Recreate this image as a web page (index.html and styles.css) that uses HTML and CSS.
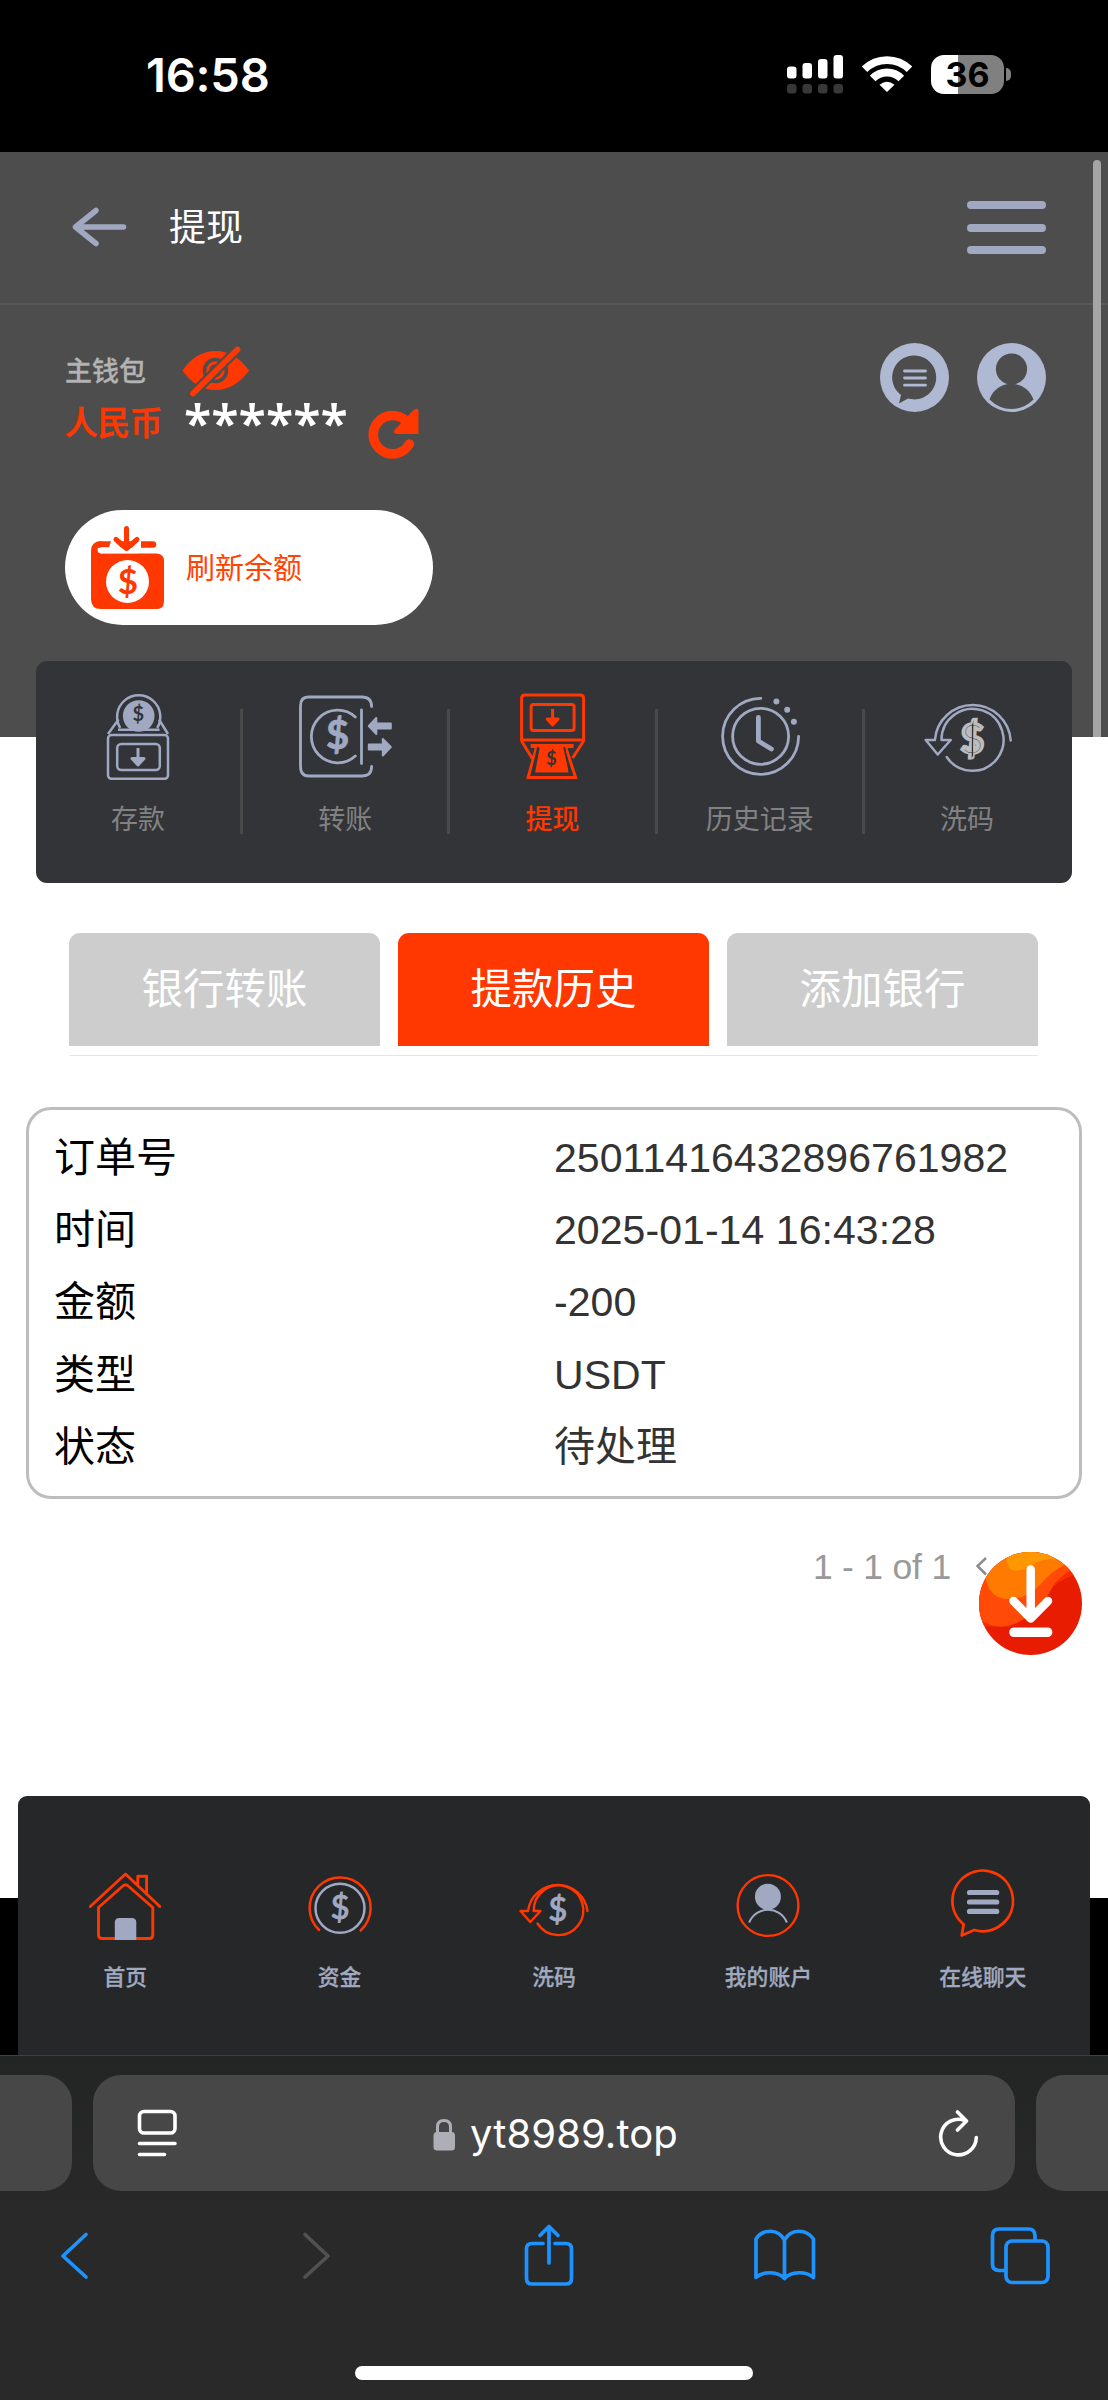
FILE: index.html
```html
<!DOCTYPE html>
<html lang="zh-CN">
<head>
<meta charset="utf-8">
<title>提现</title>
<link rel="stylesheet" href="styles.css">
</head>
<body>
<div class="phone">
  <div class="status">
    <span class="clock">16:58</span>
    <div class="indicators">
      <svg class="signal" viewBox="787 54 57 41" width="57" height="41">
        <g fill="#fff"><rect x="787" y="66.500" width="9.500" height="12" rx="3"/><rect x="802.500" y="63" width="9.500" height="15.500" rx="3"/><rect x="818" y="59" width="9.500" height="19.500" rx="3"/><rect x="833.500" y="55" width="9.500" height="23.500" rx="3"/></g>
        <g fill="#383838"><rect x="787" y="84" width="9.500" height="9.500" rx="3"/><rect x="802.500" y="84" width="9.500" height="9.500" rx="3"/><rect x="818" y="84" width="9.500" height="9.500" rx="3"/><rect x="833.500" y="84" width="9.500" height="9.500" rx="3"/></g>
      </svg>
      <svg class="wifi" viewBox="862 54 50 41" width="50" height="41">
        <g fill="none" stroke="#fff" stroke-width="7.800"><path d="M864.500 69.300A32 32 0 0 1 909.500 69.300"/><path d="M872.700 78.500A20 20 0 0 1 901.300 78.500"/></g>
        <path d="M879.500 84.800Q887 78.800 894.500 84.800L887 92z" fill="#fff"/>
      </svg>
      <div class="battery"><span class="battery-level">36</span></div>
    </div>
  </div>

  <header class="topbar">
    <svg viewBox="72 208 56 42" width="56" height="42"><path d="M96 211.500L75.500 228L96 244.500M76.500 228H123.500" fill="none" stroke="#a0a9c1" stroke-width="5.500" stroke-linecap="round" stroke-linejoin="round"/></svg>
    <h1>提现</h1>
    <div class="menu"><i></i><i></i><i></i></div>
  </header>

  <section class="wallet">
    <div class="balance">
      <div class="balance-row">
        <span class="wallet-name">主钱包</span>
        <svg viewBox="182 345 69 55" width="69" height="55">
          <path d="M182.500 371.500Q196 352 215.500 352T249 371.500Q235 391 215.500 391T182.500 371.500Z" fill="#ff3700"/>
          <circle cx="215.500" cy="371.500" r="11" fill="#ff3700" stroke="#4d4d4d" stroke-width="3.500"/>
          <circle cx="215.500" cy="371.500" r="5.200" fill="none" stroke="#4d4d4d" stroke-width="2.200"/>
          <path d="M237.500 350.500L193 394.500" stroke="#4d4d4d" stroke-width="10" stroke-linecap="round"/>
          <path d="M237.500 350.500L193 394.500" stroke="#ff3700" stroke-width="5.800" stroke-linecap="round"/>
        </svg>
      </div>
      <div class="amount-row">
        <span class="currency">人民币</span>
        <span class="amount">******</span>
        <svg viewBox="367 407 53 54" width="53" height="54">
          <path d="M405 422A19.200 19.200 0 1 0 408.300 445" fill="none" stroke="#ff3700" stroke-width="9.600" stroke-linecap="round"/>
          <path d="M412.500 411Q417.500 407.500 417.500 413V435H396Q391 434 394 430.500Z" fill="#ff3700"/>
        </svg>
      </div>
      <button class="refresh">
        <svg viewBox="90 525 76 87" width="76" height="87">
          <path d="M100 545.500H153" stroke="#ff3700" stroke-width="6.500" stroke-linecap="round"/>
          <path d="M101 542.300Q91 542.300 91 552V600Q91 610 101 610H157Q164 610 164 602V562Q164 554.500 156 554.500H101Q97.500 554 97.500 551Q97.500 548 101 548H112Z" fill="#ff3700"/>
          <path d="M112 539L126.500 554.500L141 539V549L138 554.300H115L100 554.300Q97.500 551 101 548.300H109Z" fill="#fff"/>
          <path d="M126.500 529.500V549M116 540.500L126.500 549.500L137 540.500" fill="none" stroke="#ff3700" stroke-width="5" stroke-linecap="round" stroke-linejoin="round"/>
          <circle cx="127.500" cy="582.500" r="21.500" fill="#fff"/>
          <text x="127.800" y="595" class="coin" font-size="35" fill="#ff3700">$</text>
        </svg>
        <span>刷新余额</span>
      </button>
    </div>
    <div class="shortcuts">
      <svg viewBox="880 343 69 69" width="69" height="69">
        <circle cx="914.500" cy="377.500" r="34.500" fill="#afb9d3"/>
        <path d="M901 395L899 403.500L908 398.500A22 22 0 1 0 901 395Z" fill="#4d4d4d"/>
        <path d="M904.500 371H925.500M904.500 378H925.500M904.500 385.200H925.500" stroke="#afb9d3" stroke-width="2.800" stroke-linecap="round"/>
      </svg>
      <svg viewBox="977.200 343 69 69" width="69" height="69">
        <circle cx="1011.700" cy="377.500" r="34.500" fill="#afb9d3"/>
        <circle cx="1011.700" cy="369" r="15.600" fill="#4d4d4d"/>
        <path d="M989.700 399.500C997 378.500 1026 378.500 1033.700 399.500Q1024 409 1011.700 409T989.700 399.500Z" fill="#4d4d4d"/>
      </svg>
    </div>
  </section>

  <nav class="actions">
    <a class="action">
      <svg viewBox="89 688 100 96" width="100" height="96" fill="none" stroke="#a0a9c1" stroke-width="2.500">
        <path d="M121.200 728A21.600 21.600 0 1 1 158.200 728"/>
        <circle cx="139.700" cy="716" r="15.800" fill="#a0a9c1" stroke="none"/>
        <path d="M119 729.700H160.500M109 734L119.500 719.500M169 734L160 719.500"/>
        <rect x="109" y="735" width="60" height="43.800" rx="3.500"/><rect x="118.200" y="744" width="42.600" height="26" rx="4"/>
        <path d="M139 748V758M133 758.500H145L139 765Z" fill="#a0a9c1" stroke-width="3" stroke-linejoin="round"/>
        <text x="139.400" y="721" class="coin" font-size="20" fill="#333438" stroke="none">$</text>
      </svg>
      <span>存款</span>
    </a>
    <a class="action">
      <svg viewBox="296.200 688 100 96" width="100" height="96" fill="none" stroke="#a0a9c1" stroke-width="2.800" stroke-linecap="round">
        <path d="M372.800 706.500Q372.800 697 363 697H309.500Q301.700 697 301.700 706V766Q301.700 776 309.500 776H363Q372.800 776 372.800 766.500"/>
        <path d="M356.500 717A26.300 26.300 0 1 0 356.500 756M362.700 710V763.500"/>
        <g fill="#a0a9c1" stroke-width="2" stroke-linejoin="round"><path d="M370 726L377.500 718V723.500H392V728.500H377.500V734Z"/><path d="M392 747L384 739V744.500H370V749.500H384V755.500Z"/></g>
        <text x="338.700" y="749" class="coin" font-size="40" fill="#a0a9c1" stroke="#a0a9c1" stroke-width=".8">$</text>
      </svg>
      <span>转账</span>
    </a>
    <a class="action is-active">
      <svg viewBox="503.400 688 100 96" width="100" height="96" fill="none" stroke="#ff3700" stroke-width="3">
        <path d="M523 740V698.500Q523 695 526.500 695H581.500Q585 695 585 698.500V740Z"/>
        <rect x="532.500" y="704.500" width="43" height="26" rx="2.500"/>
        <path d="M554 709V718M548.500 719H559.500L554 725Z" fill="#ff3700" stroke-linejoin="round"/>
        <path d="M523 741L534 759M585 741L574 758M538 747L529.500 777.500H577L567 747"/>
        <path d="M532 744H575V748H566.500L570 772.500H536.500L541 748H532Z" fill="#ff3700" stroke="none"/>
        <path d="M539.500 747L533.500 773.500M565.500 747L571.500 773.500" stroke="#333438" stroke-width="1.800"/>
        <text x="553" y="765" class="coin" font-size="18" fill="#333438" stroke="none">$</text>
      </svg>
      <span>提现</span>
    </a>
    <a class="action">
      <svg viewBox="710.600 688 100 96" width="100" height="96" fill="none" stroke="#a0a9c1" stroke-width="2.800" stroke-linecap="round">
        <path d="M761.500 698.300A38 38 0 1 0 799.200 736.500"/><circle cx="761.200" cy="736.300" r="28"/>
        <path d="M759 717.500V741L772 749" stroke-width="4.800" stroke-linejoin="round"/>
        <g fill="#a0a9c1" stroke="none"><circle cx="777" cy="701.500" r="3"/><circle cx="787.800" cy="709.800" r="3"/><circle cx="794.500" cy="721.800" r="3"/></g>
      </svg>
      <span>历史记录</span>
    </a>
    <a class="action">
      <svg viewBox="917.800 688 100 96" width="100" height="96" fill="none" stroke="#a0a9c1" stroke-width="2.500" stroke-linecap="round">
        <path d="M942.300 740A31 31 0 1 1 947.500 757M935.700 740A38 38 0 0 1 1011.500 740.500M935.700 740H926.500L938.500 754.500L951.500 740H942.300" stroke-linejoin="round"/>
        <text x="973.200" y="753" class="coin" font-size="40" fill="#bdbdbd" stroke="#bdbdbd" stroke-width="3.500">$</text>
        <path d="M973.300 724V756" stroke="#333438" stroke-width="1.200"/>
        <text x="973.200" y="753" class="coin thin" font-size="40" fill="#333438" stroke="none">$</text>
      </svg>
      <span>洗码</span>
    </a>
  </nav>

  <main class="content">
    <div class="tabs"><a>银行转账</a><a class="is-selected">提款历史</a><a>添加银行</a></div>
    <dl class="record">
      <dt>订单号</dt><dd>25011416432896761982</dd>
      <dt>时间</dt><dd>2025-01-14 16:43:28</dd>
      <dt>金额</dt><dd>-200</dd>
      <dt>类型</dt><dd>USDT</dd>
      <dt>状态</dt><dd>待处理</dd>
    </dl>
    <div class="pager">
      <span>1 - 1 of 1</span>
      <svg viewBox="0 0 14 22" width="14" height="22"><path d="M11 2L2.500 10L11 18.500" fill="none" stroke="#8c8c8c" stroke-width="2.500"/></svg>
    </div>
  </main>

  <div class="dock">
  <nav class="bottom-nav">
    <a>
      <svg viewBox="85.200 1868 80 76" width="80" height="76" fill="none" stroke="#ff3700" stroke-width="2.900" stroke-linecap="round" stroke-linejoin="round">
        <path d="M90.500 1906.500L125.700 1874L160 1906.500M138 1884.500V1876.300H146.800V1892.500"/>
        <path d="M98.700 1907.500L123 1886Q125.700 1883.500 128.400 1886L153 1907.500V1935Q153 1938.500 149.500 1938.500H102.500Q98.700 1938.500 98.700 1935Z"/>
        <path d="M115 1940V1922.500Q115 1918 119.500 1918H132Q136.500 1918 136.500 1922.500V1940Z" fill="#a0a9c1" stroke="none"/>
      </svg><span>首页</span>
    </a>
    <a>
      <svg viewBox="299.600 1868 80 76" width="80" height="76" fill="none" stroke-width="2.500" stroke-linecap="round">
        <path d="M318.700 1930A30.500 30.500 0 1 1 360.200 1930.500" stroke="#ff3700"/><circle cx="339.600" cy="1908.300" r="24.500" stroke="#a0a9c1"/>
        <text x="339.800" y="1919" class="coin regular" font-size="33" fill="#a0a9c1" stroke="#a0a9c1" stroke-width=".8">$</text>
      </svg><span>资金</span>
    </a>
    <a>
      <svg viewBox="514 1868 80 76" width="80" height="76" fill="none" stroke="#ff3700" stroke-width="2.400" stroke-linecap="round" stroke-linejoin="round">
        <path d="M533.700 1911A24.800 24.800 0 1 1 537.500 1923.500M528 1911A30 30 0 0 1 587.500 1911M528 1911H520.500L530.300 1922L540.500 1911H533.700"/>
        <text x="557.700" y="1921" class="coin regular" font-size="33" fill="#a0a9c1" stroke="#a0a9c1" stroke-width=".8">$</text>
      </svg><span>洗码</span>
    </a>
    <a>
      <svg viewBox="728.400 1868 80 76" width="80" height="76" fill="none">
        <circle cx="768.400" cy="1905.500" r="30.400" stroke="#ff3700" stroke-width="2.400"/><circle cx="768.300" cy="1896.800" r="13" fill="#a0a9c1"/>
        <path d="M749.500 1922.500C757 1905.500 780 1905.500 787.300 1922.500" stroke="#a0a9c1" stroke-width="2"/>
      </svg><span>我的账户</span>
    </a>
    <a>
      <svg viewBox="942.800 1868 80 76" width="80" height="76" fill="none" stroke-linejoin="round">
        <path d="M963.500 1924.500L961.500 1935.500L974 1930A30.300 30.300 0 1 0 963.500 1924.500Z" stroke="#ff3700" stroke-width="2.800"/>
        <path d="M969.300 1892.500H996.500M969.300 1902H996.500M969.300 1911.400H996.500" stroke="#a0a9c1" stroke-width="5.200" stroke-linecap="round"/>
      </svg><span>在线聊天</span>
    </a>
  </nav>
  </div>

  <footer class="browser">
    <div class="address-row">
      <div class="peek peek-left"></div>
      <div class="address">
        <svg viewBox="136 2108 42 52" width="42" height="52" fill="none" stroke="#fff" stroke-width="3.600" stroke-linecap="round"><rect x="139.500" y="2112.500" width="35.500" height="21.500" rx="4.500"/><path d="M139.500 2144.500H175M139.500 2155.500H164.500"/></svg>
        <div class="site">
          <svg viewBox="433 2116 22 33" width="22" height="33"><path d="M437.500 2131V2125Q437.500 2118.500 444 2118.500T450.500 2125V2131" fill="none" stroke="#aeaeb7" stroke-width="3"/><rect x="433.500" y="2130" width="21.500" height="18.500" rx="3.500" fill="#aeaeb7"/></svg>
          <span>yt8989.top</span>
        </div>
        <svg viewBox="938 2106 42 50" width="42" height="50" fill="none" stroke="#fff" stroke-width="3.600" stroke-linecap="round" stroke-linejoin="round"><path d="M965 2118.500A17.800 17.800 0 1 0 976.300 2135.500M957.500 2110L966.500 2119L957.500 2128"/></svg>
      </div>
      <div class="peek peek-right"></div>
    </div>
    <div class="toolbar">
      <svg viewBox="59 2231 31 49" width="31" height="49"><path d="M86 2234.500L63 2256L86 2277" class="tool"/></svg>
      <svg viewBox="301 2231 31 49" width="31" height="49"><path d="M305 2234.500L328 2256L305 2277" class="tool tool-off"/></svg>
      <svg viewBox="523 2221 52 66" width="52" height="66"><path d="M543 2242.500H532Q526.500 2242.500 526.500 2248V2277.500Q526.500 2283 532 2283H566Q571.500 2283 571.500 2277.500V2248Q571.500 2242.500 566 2242.500H555M549 2226V2262M540 2234.500L549 2225.500L558 2234.500" class="tool"/></svg>
      <svg viewBox="752 2227 65 56" width="65" height="56"><path d="M784.500 2240C778 2228.500 763 2228.500 756 2239V2277.500C763 2271 778 2271 784.500 2278.500C791 2271 806 2271 813.500 2277.500V2239C806 2228.500 791 2228.500 784.500 2240V2278" class="tool"/></svg>
      <svg viewBox="989 2225 62 61" width="62" height="61"><path d="M1005 2270.500H999Q992.500 2270.500 992.500 2264V2236Q992.500 2229 999 2229H1028.500Q1035 2229 1035 2236V2240" class="tool"/><rect x="1006" y="2241" width="42" height="41.500" rx="6" class="tool"/></svg>
    </div>
    <div class="home-bar"></div>
  </footer>

  <div class="scroll-thumb"></div>
  <svg class="download" viewBox="979 1551 104 104" width="104" height="104">
    <defs>
      <clipPath id="round"><circle cx="1030.500" cy="1603.500" r="51.500"/></clipPath>
    </defs>
    <g clip-path="url(#round)">
      <rect x="979" y="1551" width="104" height="104" fill="#e81c00"/>
      <path d="M979 1625Q1010 1632 1036 1608Q1052 1580 1078 1574V1551H979Z" fill="#fa2c00"/>
      <path d="M979 1619Q998 1632 1017 1623Q1042 1610 1054 1584Q1064 1574 1072 1569V1551H979Z" fill="#ff4a08"/>
      <path d="M986 1579Q990 1600 1010 1599Q1028 1598 1040 1585Q1052 1570 1070 1562V1551H979Z" fill="#ff7a00"/>
      <path d="M1008 1551Q1004 1568 1014 1570.500Q1025 1571 1034 1564Q1043 1558 1064 1559V1551Z" fill="#ff9800"/>
    </g>
    <path d="M1030.700 1569.500V1616M1013.500 1601L1030.700 1618.500L1048 1601" fill="none" stroke="#fff" stroke-width="8.500" stroke-linecap="round" stroke-linejoin="round"/>
    <rect x="1009.300" y="1627.500" width="43" height="9.500" rx="4.500" fill="#fff"/>
  </svg>
</div>
</body>
</html>
```
FILE: styles.css
```css
* { box-sizing: border-box; }
body {
  margin: 0;
  background: #fff;
  font-family: "Liberation Sans", "Noto Sans CJK SC", sans-serif;
}
svg { display: block; flex: none; }
.phone { position: relative; width: 1108px; height: 2400px; overflow: hidden; }

.status {
  height: 152px;
  padding: 0 104px 3px 146px;
  background: #000;
  color: #fff;
  display: flex;
  align-items: center;
  justify-content: space-between;
  font-family: Inter, sans-serif;
}
.clock { font-size: 47px; font-weight: 600; letter-spacing: -.2px; line-height: 60px; }
.indicators { display: flex; align-items: center; }
.wifi { margin: 0 19px 0 18px; }
.battery {
  position: relative;
  width: 73px;
  height: 39px;
  border-radius: 13px;
  background: linear-gradient(90deg, #fff 37%, #808080 37%);
  color: #000;
  display: flex;
  align-items: center;
  justify-content: center;
}
.battery::after {
  content: "";
  position: absolute;
  left: 75px;
  top: 13px;
  width: 5px;
  height: 13px;
  border-radius: 0 5px 5px 0;
  background: #808080;
}
.battery-level { font-size: 34px; font-weight: 700; line-height: 39px; }

.topbar {
  height: 153px;
  padding: 0 62px 0 72px;
  background: #4d4d4d;
  border-bottom: 2px solid #595959;
  display: flex;
  align-items: center;
}
.topbar h1 { margin: 2px 0 0 41px; color: #fff; font-size: 37px; font-weight: 400; line-height: 54px; }
.menu { width: 79px; height: 53px; margin-left: auto; display: flex; flex-direction: column; justify-content: space-between; }
.menu i { height: 8px; border-radius: 4px; background: #a0a9c1; }

.wallet {
  height: 432px;
  padding: 38px 62px 0 65px;
  background: #4d4d4d;
  display: flex;
  justify-content: space-between;
}
.balance-row { display: flex; align-items: center; height: 57px; margin-bottom: 3px; gap: 36px; }
.wallet-name { width: 81px; color: #b3b3b3; font-size: 27px; font-weight: 500; line-height: 40px; white-space: nowrap; -webkit-text-stroke: .3px; }
.amount-row { display: flex; align-items: flex-start; height: 58px; }
.currency { width: 119px; margin-top: 2px; color: #ff3700; font-size: 32.5px; font-weight: 500; line-height: 38px; -webkit-text-stroke: .6px; }
.amount { width: 184px; margin-top: -13px; color: #fff; font-family: "Noto Sans", sans-serif; font-size: 50px; font-weight: 600; line-height: 64px; }
.amount-row svg { margin-top: 3px; }
.refresh {
  width: 368px;
  height: 115px;
  margin: 49px 0 0;
  padding: 0 0 0 25px;
  border: 0;
  border-radius: 58px;
  background: #fff;
  color: #ff4300;
  display: flex;
  align-items: center;
  gap: 20px;
  font: 400 29px/42px "Noto Sans CJK SC", sans-serif;
}
.refresh span { margin-bottom: 4px; }
.shortcuts { display: flex; gap: 28px; height: 69px; }
.coin { font-family: Lato, sans-serif; font-weight: 700; text-anchor: middle; }
.coin.thin { font-weight: 100; }
.coin.regular { font-weight: 500; }

.actions {
  position: relative;
  height: 222px;
  margin: -76px 36px 0;
  border-radius: 11px;
  background: #333438;
  display: grid;
  grid-template-columns: repeat(5, 1fr);
}
.action {
  height: 125px;
  margin-top: 48px;
  border-right: 3px solid #4a4a4b;
  display: flex;
  flex-direction: column;
  align-items: center;
  color: #828282;
  font-size: 27px;
  line-height: 40px;
}
.action:last-child { border-right-color: transparent; }
.action svg { margin: -21px 0 16px; }
.action.is-active { color: #ff3700; font-weight: 500; }

.content { height: 1015px; padding: 50px 26px 0; }
.tabs {
  margin: 0 44px 0 43px;
  padding-bottom: 9px;
  border-bottom: 1px solid #e6e6e6;
  display: grid;
  grid-template-columns: repeat(3, 1fr);
  gap: 18px;
}
.tabs a {
  height: 113px;
  border-radius: 11px 11px 0 0;
  background: #cdcdcd;
  color: #fff;
  text-align: center;
  font-size: 41.5px;
  line-height: 114px;
}
.tabs .is-selected { background: #ff3700; }
.record {
  height: 392px;
  margin: 51px 0 0;
  padding: 12px 25px;
  border: 3px solid #bdbdbd;
  border-radius: 25px;
  display: grid;
  grid-template-columns: 500px 1fr;
  grid-auto-rows: 72.2px;
  align-items: center;
  color: #333;
  font-size: 41px;
}
.record dt { margin-top: -8px; color: #000; }
.record dd { margin: 0; line-height: 60px; letter-spacing: .06px; }
.pager {
  display: flex;
  align-items: center;
  justify-content: flex-end;
  gap: 24px;
  height: 54px;
  margin-top: 41px;
  padding-right: 93px;
  color: #999;
  font-size: 35.5px;
  letter-spacing: -.2px;
}

.dock {
  position: relative;
  margin-top: -102px;
  padding: 0 18px;
  background: linear-gradient(transparent 102px, #000 102px);
}
.bottom-nav {
  height: 259px;
  padding-top: 72px;
  border-radius: 9px 9px 0 0;
  background: #252729;
  display: grid;
  grid-template-columns: repeat(5, 1fr);
}
.bottom-nav a {
  display: flex;
  flex-direction: column;
  align-items: center;
  gap: 18px;
  color: #a0a9bf;
  font-size: 21.8px;
  font-weight: 500;
  line-height: 32px;
  -webkit-text-stroke: .3px;
}

.browser {
  height: 345px;
  border-top: 1px solid #3f3f40;
  background: linear-gradient(#232424, #292929 45%, #282928);
}
.address-row { display: flex; gap: 21px; padding-top: 19px; }
.address, .peek { height: 116px; border-radius: 28px; background: #474748; }
.peek { width: 72px; }
.peek-left { border-radius: 0 28px 28px 0; }
.peek-right { border-radius: 28px 0 0 28px; }
.address { width: 922px; padding: 0 35px 0 43px; display: flex; align-items: center; justify-content: space-between; }
.site { display: flex; align-items: center; gap: 15px; margin: 2px 5px 0 0; color: #fff; font: 400 40px/56px Inter, sans-serif; letter-spacing: .1px; }
.toolbar {
  height: 70px;
  margin-top: 29px;
  padding: 0 57px 0 59px;
  display: grid;
  grid-template-columns: 242px 222px 229px 237px 62px;
  align-items: center;
}
.tool { fill: none; stroke: #1d93ff; stroke-width: 3.7; stroke-linecap: round; stroke-linejoin: round; }
.tool-off { stroke: #515151; }
.home-bar { width: 398px; height: 14px; margin: 76px auto 0; border-radius: 7px; background: #fff; }

.scroll-thumb {
  position: absolute;
  left: 1092.5px;
  top: 160px;
  width: 8px;
  height: 577px;
  border-radius: 4px 4px 0 0;
  background: #a5a5a5;
}
.download { position: absolute; left: 979px; top: 1551px; }
```
